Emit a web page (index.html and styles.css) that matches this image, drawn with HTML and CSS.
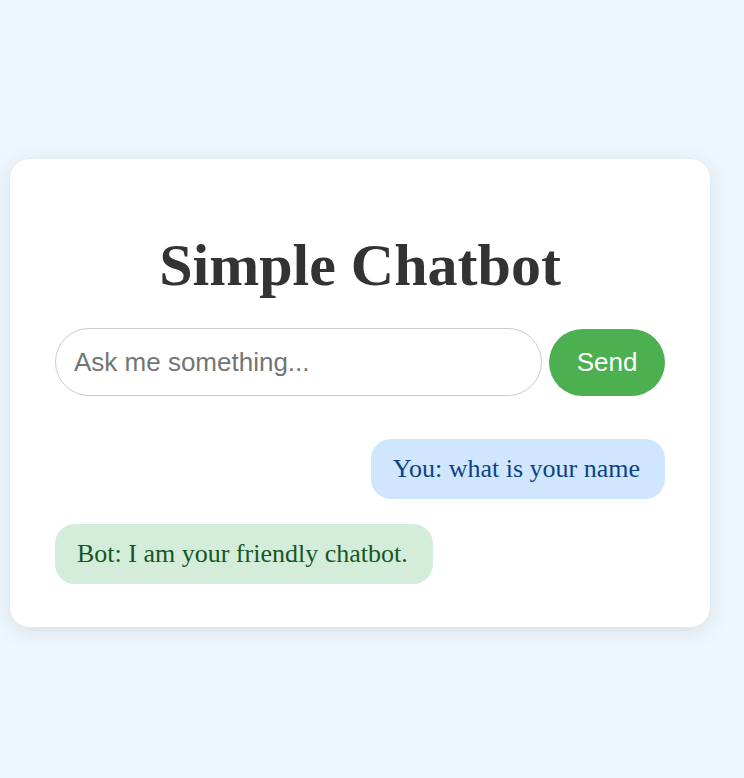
FILE: index.html
```html
<!DOCTYPE html>
<html lang="en">
<head>
<meta charset="utf-8">
<title>Simple Chatbot</title>
<link rel="stylesheet" href="styles.css">
</head>
<body>
<div class="page">
  <div class="card">
    <h1 class="title">Simple Chatbot</h1>
    <div class="input-row">
      <input class="chat-input" type="text" placeholder="Ask me something...">
      <button class="send-btn">Send</button>
    </div>
    <div class="messages">
      <div class="msg msg-user">You: what is your name</div>
      <div class="msg msg-bot">Bot: I am your friendly chatbot.</div>
    </div>
  </div>
</div>
</body>
</html>
```

FILE: styles.css
```css
html, body {
  margin: 0;
  padding: 0;
}
body {
  background: #eef6fe;
  font-family: "Liberation Serif", "Times New Roman", serif;
}
.page {
  box-sizing: border-box;
  height: 778px;
  padding: 159px 34px 0 10px;
}
.card {
  background: #ffffff;
  border-radius: 20px;
  box-shadow: 0 4px 22px rgba(0, 0, 0, 0.1);
  padding: 45px 45px 43px;
  width: 700px;
  box-sizing: border-box;
}
.title {
  margin: 27px 0 28px;
  font-size: 60px;
  font-weight: bold;
  color: #333333;
  text-align: center;
  line-height: 69px;
}
.input-row {
  display: flex;
  gap: 7px;
  align-items: center;
}
.chat-input {
  flex: 1;
  min-width: 0;
  height: 68px;
  box-sizing: border-box;
  border: 1px solid #cccccc;
  border-radius: 34px;
  padding: 0 18px;
  font-family: "Liberation Sans", Arial, sans-serif;
  font-size: 26px;
  color: #333;
  outline: none;
}
.chat-input::placeholder {
  color: #757575;
}
.send-btn {
  height: 67px;
  width: 116px;
  border: none;
  border-radius: 34px;
  background: #4caf50;
  color: #ffffff;
  font-family: "Liberation Sans", Arial, sans-serif;
  font-size: 26px;
  padding: 0;
}
.messages {
  display: flex;
  flex-direction: column;
  gap: 25px;
  margin-top: 43px;
}
.msg {
  font-size: 26px;
  line-height: 30px;
  padding: 15px 25px 15px 22px;
  border-radius: 20px;
}
.msg-user {
  align-self: flex-end;
  background: #d0e6ff;
  color: #0b4386;
}
.msg-bot {
  align-self: flex-start;
  background: #d4edda;
  color: #155724;
}
```
